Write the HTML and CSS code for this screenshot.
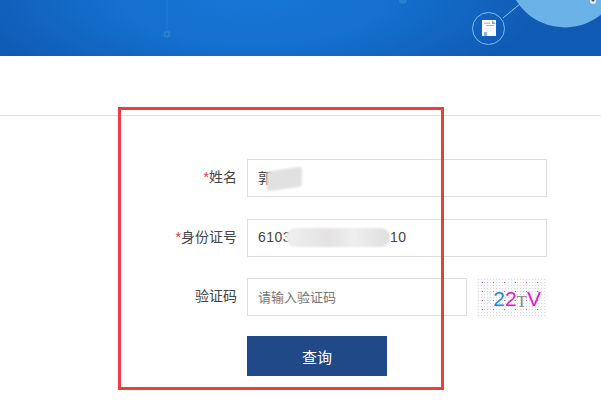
FILE: index.html
```html
<!DOCTYPE html>
<html lang="zh">
<head>
<meta charset="utf-8">
<title>查询</title>
<link rel="stylesheet" href="styles.css">
</head>
<body>
<header class="banner">
  <svg class="art" width="601" height="56" viewBox="0 0 601 56" aria-hidden="true">
    <line x1="167" y1="0" x2="167" y2="30" stroke="#3f8fdc" stroke-opacity=".4"/>
    <circle cx="167" cy="34" r="3.5" fill="#3f8fdc" fill-opacity=".5"/>
    <circle cx="167" cy="34" r="1.5" fill="#1d6cc4"/>
    <circle cx="403" cy="0" r="4" fill="#3f8fdc" fill-opacity=".5"/>
    <line x1="503" y1="18" x2="520" y2="4" stroke="#8cc4f0" stroke-width="1"/>
    <circle cx="488.500" cy="28.500" r="16" fill="none" stroke="#7fbdee" stroke-width="1"/>
    <rect x="482" y="20" width="14" height="16" fill="#fff"/>
    <path d="M492 20l4 4h-4z" fill="#9fa9c4"/>
    <rect x="484" y="22.500" width="6" height="1.400" fill="#f0a9a0"/>
    <rect x="486" y="25" width="8" height="1" fill="#7cc0ea"/>
    <rect x="484" y="28" width="10" height=".8" fill="#e3ebf1"/>
    <rect x="484" y="30.500" width="10" height=".8" fill="#e3ebf1"/>
    <rect x="484" y="32" width="3" height="4" fill="#7cc4d4"/>
    <circle cx="565" cy="-30" r="57.500" fill="#6bb2e8"/>
    <circle cx="593" cy="1" r="3" fill="#e8eef4"/>
    <circle cx="593" cy="0" r="1.500" fill="#45505c"/>
  </svg>
</header>

<main class="content">
  <form class="form">
    <div class="row">
      <label class="label"><span class="req">*</span>姓名</label>
      <div class="field">
        <span class="value">郭</span>
        <i class="smudge smudge-name"></i>
      </div>
    </div>
    <div class="row">
      <label class="label"><span class="req">*</span>身份证号</label>
      <div class="field">
        <span class="value">6103</span>
        <i class="smudge smudge-id"></i>
        <span class="value value-end">10</span>
      </div>
    </div>
    <div class="row row-code">
      <label class="label">验证码</label>
      <div class="field field-code"><span class="placeholder">请输入验证码</span></div>
      <div class="captcha">
        <span class="c-blue">2</span><span class="c-pink">2</span><span class="c-gray">T</span><span class="c-pink">V</span>
      </div>
    </div>
    <div class="actions">
      <button class="submit" type="button">查询</button>
    </div>
  </form>
  <div class="annotation"></div>
</main>
</body>
</html>
```
FILE: styles.css
```css
* { box-sizing: border-box; }

html, body {
  margin: 0;
  height: 100%;
  overflow: hidden;
  background: #fff;
  font-family: "Liberation Sans", "Noto Sans CJK SC", sans-serif;
  color: #444;
}

.banner {
  height: 56px;
  overflow: hidden;
  background: radial-gradient(ellipse 300px 110px at 42% -10%, #1776d6 0%, #1570cf 45%, #0f5ab3 100%), #0e52aa;
}

.art { display: block; }

.content {
  position: relative;
  margin-top: 59px;
  border-top: 1px solid #ddd;
  padding-top: 43px;
}

.form {
  display: flex;
  flex-direction: column;
  gap: 22px;
  margin-left: 130px;
  width: 417px;
}

.row {
  display: flex;
  align-items: center;
  gap: 10px;
}

.row-code { align-items: flex-start; margin-top: -1px; margin-bottom: -4px; }

.label {
  width: 107px;
  text-align: right;
  font-size: 14px;
  line-height: 36px;
  height: 38px;
  color: #444;
}

.req { color: #e8323c; }

.field {
  position: relative;
  flex: 1;
  height: 38px;
  display: flex;
  align-items: center;
  padding: 0 0 2px 10px;
  border: 1px solid #ddd;
  font-size: 14px;
  color: #444;
}

.field-code { flex: 0 0 220px; }

.value { letter-spacing: .5px; }

.value-end { position: absolute; left: 142px; }

.placeholder { font-size: 13px; color: #757575; }

.smudge {
  position: absolute;
  display: block;
  background: #e2e1e1;
  filter: blur(1px);
}

.smudge-name { left: 19px; top: 9px; width: 35px; height: 20px; border-radius: 3px; transform: skewY(-8deg); }

.smudge-id { left: 38px; top: 8px; width: 104px; height: 19px; border-radius: 9px; background: linear-gradient(90deg, #f0f0f0, #e4e2e2 40%, #eeeeee 65%, #dfdfdf); }

.captcha {
  width: 70px;
  height: 40px;
  display: flex;
  align-items: flex-end;
  justify-content: flex-end;
  padding: 0 6px 5px 0;
  background-color: #fbfafb;
  background-image:
    radial-gradient(circle, #b05cc0 .7px, transparent .9px),
    radial-gradient(circle, #d6dbe2 .5px, transparent .7px);
  background-size: 11px 9px, 3px 3px;
  font-size: 21px;
  line-height: 28px;
}

.c-blue { color: #2a86dc; }
.c-pink { color: #e11cc8; }
.c-gray { color: #8a8a8a; font-family: "Liberation Serif", serif; font-size: 17px; position: relative; top: 3px; }

.actions { margin-left: 117px; }

.submit {
  display: block;
  width: 140px;
  height: 40px;
  padding: 0;
  border: 0;
  background: #1f4a87;
  color: #fff;
  font-family: inherit;
  font-size: 15px;
}

.annotation {
  position: absolute;
  left: 118px;
  top: -9px;
  width: 326px;
  height: 283px;
  border: 3px solid #e84040;
  pointer-events: none;
}
```
